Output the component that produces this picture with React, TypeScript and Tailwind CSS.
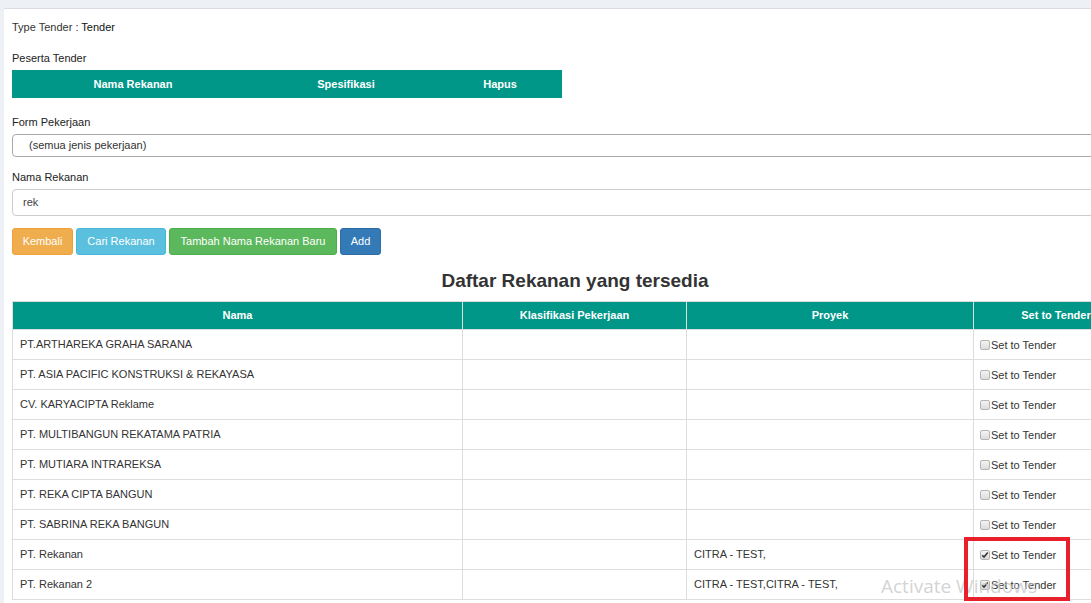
import React from 'react';

// Row data for the available partners table
const rekananList: { nama: string; proyek: string; checked: boolean }[] = [
  { nama: 'PT.ARTHAREKA GRAHA SARANA', proyek: '', checked: false },
  { nama: 'PT. ASIA PACIFIC KONSTRUKSI & REKAYASA', proyek: '', checked: false },
  { nama: 'CV. KARYACIPTA Reklame', proyek: '', checked: false },
  { nama: 'PT. MULTIBANGUN REKATAMA PATRIA', proyek: '', checked: false },
  { nama: 'PT. MUTIARA INTRAREKSA', proyek: '', checked: false },
  { nama: 'PT. REKA CIPTA BANGUN', proyek: '', checked: false },
  { nama: 'PT. SABRINA REKA BANGUN', proyek: '', checked: false },
  { nama: 'PT. Rekanan', proyek: 'CITRA - TEST,', checked: true },
  { nama: 'PT. Rekanan 2', proyek: 'CITRA - TEST,CITRA - TEST,', checked: true },
];

const CheckBox = ({ checked }: { checked: boolean }) => (
  <span className="inline-flex items-center justify-center w-[10px] h-[10px] border border-[#b5b5b5] rounded-[2px] bg-gradient-to-b from-[#f4f4f4] to-[#dcdcdc] mr-[1px]">
    {checked && (
      <svg width="8" height="8" viewBox="0 0 8 8">
        <path d="M1.2 4.2 L3 6 L6.8 1.6" stroke="#333" strokeWidth="1.6" fill="none" />
      </svg>
    )}
  </span>
);

export default function App() {
  return (
    <div className="w-[1091px] h-[603px] overflow-hidden bg-[#edf0f4] font-['Liberation_Sans',Arial,sans-serif] text-[11px] text-[#333] relative">
      <div className="mt-[8px] ml-[4px] w-[1140px] h-[600px] bg-white border-t border-[#d9dde3] pl-[8px] pt-[10px]">
        <div className="w-[1126px]">
          <p className="leading-[16px]">
            Type Tender : <span className="text-[#111]">Tender</span>
          </p>

          <p className="mt-[15px] leading-[16px] text-[#222]">Peserta Tender</p>
          <div className="mt-[4px] w-[550px] h-[28px] bg-[#009688] flex text-white font-bold">
            <div className="w-[242px] flex items-center justify-center">Nama Rekanan</div>
            <div className="w-[184px] flex items-center justify-center">Spesifikasi</div>
            <div className="w-[124px] flex items-center justify-center">Hapus</div>
          </div>

          <p className="mt-[16px] leading-[16px] text-[#222]">Form Pekerjaan</p>
          <div className="mt-[4px] h-[23px] border border-[#a9a9a9] rounded-[4px] flex items-center pl-[16px] text-[#333]">
            (semua jenis pekerjaan)
          </div>

          <p className="mt-[12px] leading-[16px] text-[#222]">Nama Rekanan</p>
          <div className="mt-[4px] h-[27px] border border-[#ccc] rounded-[4px] flex items-center pl-[10px] text-[#444]">
            rek
          </div>

          <div className="mt-[12px] flex gap-[3px] text-white">
            <div className="w-[61px] h-[27px] rounded-[3px] bg-[#f0ad4e] border border-[#eea236] flex items-center justify-center">Kembali</div>
            <div className="w-[90px] h-[27px] rounded-[3px] bg-[#5bc0de] border border-[#46b8da] flex items-center justify-center">Cari Rekanan</div>
            <div className="w-[168px] h-[27px] rounded-[3px] bg-[#5cb85c] border border-[#4cae4c] flex items-center justify-center">Tambah Nama Rekanan Baru</div>
            <div className="w-[41px] h-[27px] rounded-[3px] bg-[#337ab7] border border-[#2e6da4] flex items-center justify-center">Add</div>
          </div>

          <h2 className="mt-[14px] text-center text-[19px] font-bold leading-[24px] text-[#333]">Daftar Rekanan yang tersedia</h2>

          <table className="mt-[8px] w-[1126px] table-fixed border-collapse">
            <colgroup>
              <col className="w-[450px]" />
              <col className="w-[224px]" />
              <col className="w-[287px]" />
              <col className="w-[165px]" />
            </colgroup>
            <thead>
              <tr className="h-[28px] bg-[#009688] text-white font-bold">
                <th className="border border-[#ddd]">Nama</th>
                <th className="border border-[#ddd]">Klasifikasi Pekerjaan</th>
                <th className="border border-[#ddd]">Proyek</th>
                <th className="border border-[#ddd]">Set to Tender</th>
              </tr>
            </thead>
            <tbody>
              {rekananList.map((r) => (
                <tr key={r.nama} className="h-[30px]">
                  <td className="border border-[#ddd] pl-[7px]">{r.nama}</td>
                  <td className="border border-[#ddd]"></td>
                  <td className="border border-[#ddd] pl-[7px]">{r.proyek}</td>
                  <td className="border border-[#ddd] pl-[6px]">
                    <span className="inline-flex items-center pt-[2px]">
                      <CheckBox checked={r.checked} />
                      Set to Tender
                    </span>
                  </td>
                </tr>
              ))}
            </tbody>
          </table>
        </div>
      </div>

      {/* screenshot annotation + watermark */}
      <div className="absolute left-[881px] top-[574px] text-[19px] leading-[24px] text-[#c8c8c8]/80 font-['Open_Sans',sans-serif]">
        Activate Windows
      </div>
      <div className="absolute left-[964px] top-[537px] w-[106px] h-[64px] border-[4px] border-[#e8202b]" />
    </div>
  );
}
